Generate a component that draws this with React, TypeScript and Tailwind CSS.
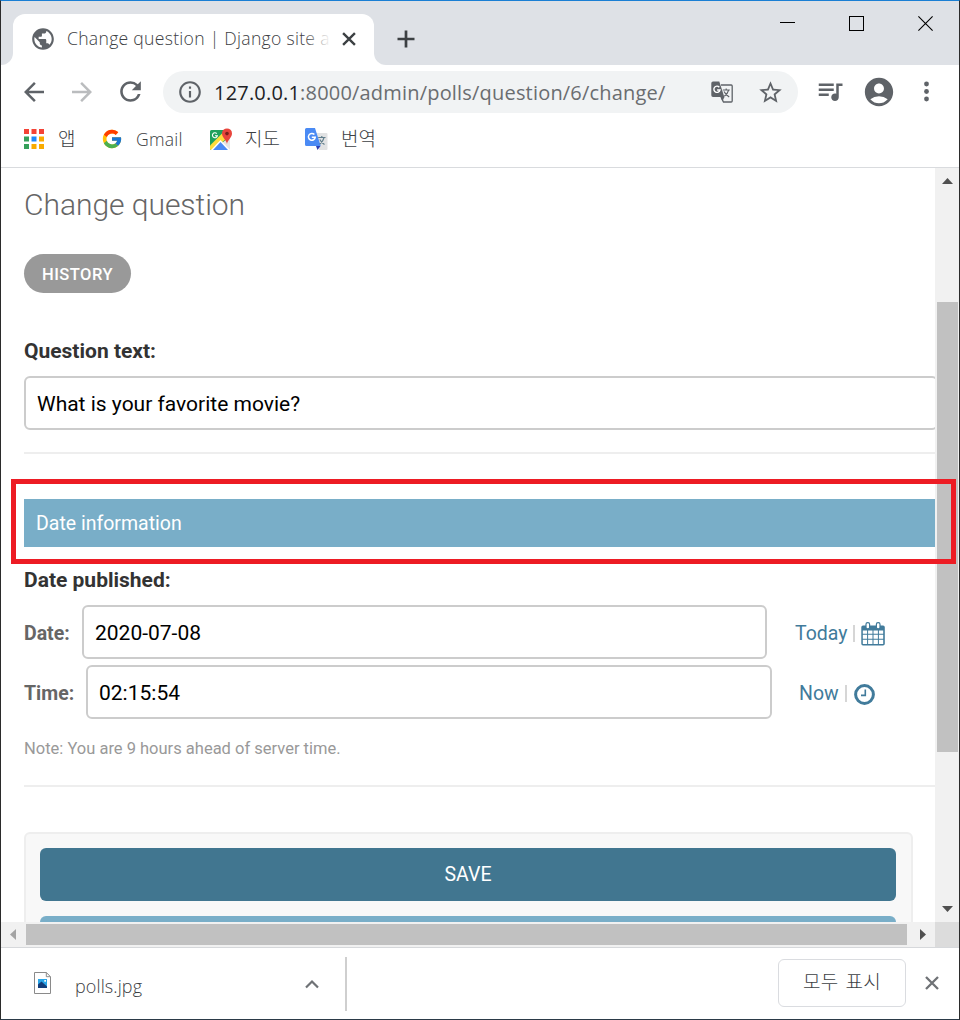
import React from "react";
import {
  MdPublic,
  MdArrowBack,
  MdArrowForward,
  MdRefresh,
  MdInfoOutline,
  MdStarBorder,
  MdQueueMusic,
  MdAccountCircle,
} from "react-icons/md";
import { FcGoogle } from "react-icons/fc";

const uiFont = "font-['Open_Sans','Noto_Sans_CJK_KR',sans-serif]";

function TabStrip() {
  return (
    <div className="flex h-[64px] shrink-0 items-end bg-[#dee1e6]">
      <div className="h-3 w-3 bg-white">
        <div className="h-3 w-3 rounded-br-xl bg-[#dee1e6]" />
      </div>
      <div className="flex h-[51px] w-[361px] items-center rounded-t-xl bg-white pl-[17px]">
        <MdPublic className="mb-[2px] size-[26px] text-[#5f6368]" />
        <div className="relative ml-[11px] h-7 w-[264px] overflow-hidden text-[17.6px] leading-[25px] font-light whitespace-nowrap text-[#3c4043]">
          <span className="tracking-[0.28px]">Change question | Django site a</span>
          <div className="absolute top-0 right-0 h-7 w-7 bg-gradient-to-r from-white/0 to-white" />
        </div>
        <svg className="mb-px ml-[11px] size-[14px]" viewBox="0 0 13 13">
          <path d="M1 1l11 11M12 1L1 12" stroke="#3c4043" strokeWidth="2.2" />
        </svg>
      </div>
      <div className="h-3 w-3 bg-white">
        <div className="h-3 w-3 rounded-bl-xl bg-[#dee1e6]" />
      </div>
      <svg className="mb-[17px] ml-[11px] size-[18px]" viewBox="0 0 18 18">
        <path d="M9 0.5v17M0.5 9h17" stroke="#3c4043" strokeWidth="2.7" />
      </svg>
      <div className="flex-1" />
      <div className="flex h-[64px] w-[179px] items-start pt-[15px]">
        <svg className="h-[15px] w-[15px]" viewBox="0 0 15 15" shapeRendering="crispEdges">
          <path d="M0 6.5h15" stroke="#000" />
        </svg>
        <svg className="ml-[54px] h-[15px] w-[15px]" viewBox="0 0 15 15" shapeRendering="crispEdges">
          <rect x=".5" y=".5" width="14" height="14" fill="none" stroke="#000" />
        </svg>
        <svg className="ml-[54px] h-[15px] w-[15px]" viewBox="0 0 15 15">
          <path d="M.4.4l14.2 14.2M14.6.4L.4 14.6" stroke="#000" strokeWidth="1.1" />
        </svg>
      </div>
    </div>
  );
}

function TranslateGlyph() {
  return (
    <svg className="size-[22px]" viewBox="0 0 22 22">
      <path d="M10 4h10.2a1 1 0 0 1 1 1v15a1 1 0 0 1-1 1h-7.700l-2.500-5" fill="#f1f3f4" stroke="#5f6368" strokeWidth="1.300" />
      <path d="M2 .5h6.300L13.300 16H2a1.700 1.700 0 0 1-1.700-1.700V2.200A1.700 1.700 0 0 1 2 .5z" fill="#5f6368" />
      <path d="M9.800 16h3.700l-2.200 4.600z" fill="#5f6368" />
      <path d="M8.300 6.200A3.100 3.100 0 1 0 9 9H6.100" fill="none" stroke="#fff" strokeWidth="1.400" />
      <path d="M11.800 9h7M15.200 7.500V9M17.600 9.200c-.6 2.600-2.200 4.600-4.300 6M13 10.500c1 2 2.800 3.800 5.200 5.500" fill="none" stroke="#5f6368" strokeWidth="1.200" />
    </svg>
  );
}

function Toolbar() {
  return (
    <div className="flex h-[54px] shrink-0 items-center bg-white pl-[18px] text-[#5f6368]">
      <MdArrowBack className="mb-px size-[30px]" />
      <MdArrowForward className="mb-px ml-[18px] size-[30px] text-[#babcbe]" />
      <MdRefresh className="mb-px ml-[18px] size-[31px]" />
      <div className="ml-[17px] flex h-[42px] w-[635px] items-center rounded-full bg-[#f1f3f4] pl-[14px]">
        <MdInfoOutline className="size-[26px]" />
        <div className="ml-[11px] w-[497px] pt-px text-[20px] leading-[42px] tracking-[0.19px] whitespace-nowrap text-[#6a6d70]">
          <span className="text-[#202124]">127.0.0.1</span>:8000/admin/polls/question/6/change/
        </div>
        <TranslateGlyph />
        <MdStarBorder className="ml-[24px] size-[27px]" />
      </div>
      <MdQueueMusic className="mb-[2px] ml-[17px] size-[30px]" />
      <MdAccountCircle className="mb-px ml-[17px] size-[34px]" />
      <svg className="ml-[28px] h-[22px] w-[6px]" viewBox="0 0 6 22">
        <circle cx="2.500" cy="3" r="2.400" fill="#5f6368" />
        <circle cx="2.500" cy="10.500" r="2.400" fill="#5f6368" />
        <circle cx="2.500" cy="18" r="2.400" fill="#5f6368" />
      </svg>
    </div>
  );
}

function AppsIcon() {
  return (
    <svg className="size-[20px]" viewBox="0 0 20 20">
      <path d="M0 0h5v5H0zM7.500 0h5v5h-5zM15 0h5v5h-5z" fill="#f44336" />
      <path d="M0 7.500h5v5H0zM0 15h5v5H0z" fill="#34a05a" />
      <path d="M7.500 7.500h5v5h-5z" fill="#1e88fb" />
      <path d="M15 7.500h5v5h-5zM7.500 15h5v5h-5zM15 15h5v5h-5z" fill="#f9ab00" />
    </svg>
  );
}

function MapsIcon() {
  return (
    <svg className="h-[22px] w-[22px]" viewBox="0 0 22 22">
      <rect x="0" y="2" width="20" height="20" rx="1.500" fill="#e5e5e5" />
      <path d="M1.500 2H14l3 9L3 22H1.500A1.500 1.500 0 0 1 0 20.500v-17A1.500 1.500 0 0 1 1.500 2z" fill="#1fa15d" />
      <path d="M0 17.500L13.500 4l3.500 6L3.500 22H1.500A1.500 1.500 0 0 1 0 20.500z" fill="#fedc3d" />
      <path d="M10.500 12L20 22H1z" fill="#fff" />
      <path d="M10.500 14L18 22H3z" fill="#4a8af4" />
      <path d="M6.800 5.600A2.500 2.500 0 1 0 7.400 7.700H5" fill="none" stroke="#fff" strokeWidth="1.100" />
      <path d="M17 16c-.6-4.500-5-6.300-5-10.600a5 5 0 0 1 10 0C22 9.700 17.600 11.500 17 16z" fill="#e8453c" />
      <circle cx="17" cy="5.600" r="1.800" fill="#7b1f1a" />
    </svg>
  );
}

function TranslateIcon() {
  return (
    <svg className="h-[22px] w-[23px]" viewBox="0 0 23 22">
      <path d="M10 5h11.500a1 1 0 0 1 1 1v15a1 1 0 0 1-1 1H14z" fill="#e1e2e3" />
      <path d="M11 18h4.500l-3 4z" fill="#2b3fb5" />
      <path d="M1.500 0H10l5.700 18H1.500A1.500 1.500 0 0 1 0 16.500v-15A1.500 1.500 0 0 1 1.500 0z" fill="#4a8af4" />
      <path d="M9.400 6.600A3.400 3.400 0 1 0 10.200 9.300H6.800" fill="none" stroke="#fff" strokeWidth="1.500" />
      <path d="M13.200 9.500h7.300M16.800 8v1.500M19 9.700c-.6 3-2.300 5-4.300 6.600M14.800 11.500c1 2 2.500 3.600 4.700 5" fill="none" stroke="#607d8b" strokeWidth="1.200" />
    </svg>
  );
}

function Bookmarks() {
  return (
    <div className="flex h-[48px] shrink-0 items-center bg-white pb-[8px] pl-[23px] text-[19px] font-light text-[#3c4043]">
      <AppsIcon />
      <span className="ml-[14px] w-[45px] leading-6 whitespace-nowrap">앱</span>
      <FcGoogle className="-ml-[2px] size-[22px]" />
      <span className="ml-[13px] w-[74px] text-[17.600px] leading-6 tracking-[0.25px] whitespace-nowrap">Gmail</span>
      <MapsIcon />
      <span className="ml-[13px] w-[60px] leading-6 whitespace-nowrap">지도</span>
      <TranslateIcon />
      <span className="ml-[13px] leading-6 whitespace-nowrap">번역</span>
    </div>
  );
}

function CalendarIcon() {
  return (
    <svg className="h-[24px] w-[24px]" viewBox="0 0 24 24">
      <path d="M2 3.500h20a1.800 1.800 0 0 1 1.800 1.800v16.400a1.800 1.800 0 0 1-1.800 1.800H2A1.800 1.800 0 0 1 .3 21.700V5.300A1.800 1.800 0 0 1 2 3.500z" fill="#417b9b" />
      <path d="M1.800 8.500h4.300v3.300H1.800zM7.100 8.500h4.400v3.300H7.100zM12.500 8.500h4.400v3.300h-4.400zM17.900 8.500h4.300v3.300h-4.300zM1.800 12.800h4.300v3.900H1.800zM7.100 12.800h4.400v3.900H7.100zM12.500 12.800h4.400v3.900h-4.400zM17.900 12.800h4.300v3.900h-4.300zM1.800 17.700h4.300V22H1.800zM7.100 17.700h4.400V22H7.100zM12.500 17.700h4.400V22h-4.400zM17.900 17.700h4.300V22h-4.300z" fill="#fff" />
      <rect x="5" y=".6" width="3.600" height="6.200" rx="1.600" fill="#fff" stroke="#417b9b" strokeWidth="1.200" />
      <rect x="15.400" y=".6" width="3.600" height="6.200" rx="1.600" fill="#fff" stroke="#417b9b" strokeWidth="1.200" />
    </svg>
  );
}

function ClockIcon() {
  return (
    <svg className="size-[21px]" viewBox="0 0 21 21">
      <circle cx="10.500" cy="10.500" r="8.900" fill="none" stroke="#417b9b" strokeWidth="3" />
      <path d="M11.300 5.500v5.900H7" fill="none" stroke="#417b9b" strokeWidth="1.600" />
    </svg>
  );
}

function Field({ className, value }: { className: string; value: string }) {
  return (
    <div
      className={`flex h-[54px] shrink-0 items-center rounded-md border-2 border-[#ccc] bg-white pt-px pl-[11px] text-[21px] leading-6 text-black ${className}`}
    >
      {value}
    </div>
  );
}

function AdminForm() {
  return (
    <div className="h-[754px] w-[934px] overflow-hidden bg-white pl-[23px] font-[Roboto,'Noto_Sans_CJK_KR',sans-serif] whitespace-nowrap">
      <h1 className="mt-[19px] h-9 text-[30px] leading-9 font-light tracking-[-0.04px] text-[#666]">Change question</h1>
      <div className="mt-[31px] flex h-[39px] w-[107px] items-center justify-center rounded-full bg-[#999] pt-[3px] text-[16.5px] font-medium tracking-[0.5px] text-white">
        HISTORY
      </div>
      <div className="mt-[46px] h-6 text-[21px] leading-6 font-bold text-[#333]">Question text:</div>
      <Field className="mt-[13px] w-[914px]" value="What is your favorite movie?" />
      <div className="mt-[22px] h-[2px] bg-[#eee]" />
      <div className="mt-[45px] flex h-12 items-center bg-[#79aec8] pt-[2px] pl-3 text-[19.500px] text-white">Date information</div>
      <div className="mt-[21px] h-6 text-[21px] leading-6 font-bold text-[#333]">Date published:</div>
      <div className="mt-[13px] flex items-center text-[19.500px] text-[#417b9b]">
        <span className="w-[58px] pt-[3px] font-bold text-[#666]">Date:</span>
        <Field className="w-[685px]" value="2020-07-08" />
        <span className="ml-[28px] w-[58px] pt-[3px]">Today</span>
        <div className="mt-[3px] mr-[6px] h-[17px] w-[2px] bg-[#d6d6d6]" />
        <div className="pt-[4px]">
          <CalendarIcon />
        </div>
      </div>
      <div className="mt-[6px] flex items-center text-[19.500px] text-[#417b9b]">
        <span className="w-[62px] pt-[3px] font-bold text-[#666]">Time:</span>
        <Field className="w-[686px]" value="02:15:54" />
        <span className="ml-[27px] w-[46px] pt-[3px]">Now</span>
        <div className="mt-[3px] mr-[7px] h-[17px] w-[2px] bg-[#d6d6d6]" />
        <div className="pt-[5px]">
          <ClockIcon />
        </div>
      </div>
      <div className="mt-[20px] h-5 text-[16.500px] leading-5 text-[#999]">Note: You are 9 hours ahead of server time.</div>
      <div className="mt-[26px] h-[2px] bg-[#eee]" />
      <div className="mt-[45px] w-[889px] rounded-md border-2 border-[#eee] bg-[#f8f8f8] py-[14px] pr-[15px] pl-[14px]">
        <div className="flex h-[53px] items-center justify-center rounded-md bg-[#417690] pt-px text-[19.500px] text-white">SAVE</div>
        <div className="mt-[15px] h-[53px] rounded-md bg-[#79aec8]" />
      </div>
    </div>
  );
}

function VerticalScrollbar() {
  return (
    <div className="flex h-[754px] w-6 flex-col items-end bg-[#f1f1f1] pr-px">
      <svg className="mt-[10px] mr-[5px] h-[6px] w-[11px]" viewBox="0 0 11 6">
        <path d="M5.500 0L11 6H0z" fill="#505050" />
      </svg>
      <div className="mt-[118px] h-[450px] w-[21px] bg-[#c1c1c1]" />
      <svg className="mt-[154px] mr-[5px] h-[6px] w-[11px]" viewBox="0 0 11 6">
        <path d="M0 0h11L5.500 6z" fill="#505050" />
      </svg>
    </div>
  );
}

function HorizontalScrollbar() {
  return (
    <div className="flex h-[25px] shrink-0 bg-[#f1f1f1]">
      <div className="flex w-[934px] items-center">
        <svg className="ml-[9px] h-[11px] w-[6px]" viewBox="0 0 6 11">
          <path d="M6 0v11L0 5.500z" fill="#a3a3a3" />
        </svg>
        <div className="ml-[10px] h-[21px] w-[881px] bg-[#c1c1c1]" />
        <svg className="ml-[13px] h-[11px] w-[6px]" viewBox="0 0 6 11">
          <path d="M0 0v11l6-5.500z" fill="#505050" />
        </svg>
      </div>
      <div className="w-6 bg-[#dcdcdc]" />
    </div>
  );
}

function DownloadShelf() {
  return (
    <div className="flex flex-1 items-start border-t border-[#d6d8db] bg-white text-[18px] font-light text-[#3c4043]">
      <svg className="mt-[24px] ml-[33px] h-[22px] w-[17px]" viewBox="0 0 17 22">
        <path d="M.5.5h11.800l4.200 4.200v16.800H.5z" fill="#fff" stroke="#8a8a8a" />
        <path d="M12.300.5v4.200h4.200" fill="none" stroke="#8a8a8a" />
        <path d="M4 7h9v9H4z" fill="#2ba6e8" />
        <path d="M4 12.500L7.500 9.500 13 14.500V16H4z" fill="#123c7a" />
        <rect x="10.300" y="8" width="1.700" height="1.700" fill="#fff" />
      </svg>
      <span className="mt-[24px] ml-[24px] w-[230px] leading-7 tracking-[0.1px]">polls.jpg</span>
      <svg className="mt-[31px] h-[10px] w-[14px]" viewBox="0 0 14 10">
        <path d="M1 8.500l6-6 6 6" fill="none" stroke="#6f7276" strokeWidth="2.200" />
      </svg>
      <div className="mt-[9px] ml-[26px] h-[54px] w-[2px] bg-[#cfcfcf]" />
      <div className="mt-[11px] ml-[431px] flex h-[48px] w-[128px] items-center justify-center rounded-md border border-[#dadce0] pb-px text-[19px] tracking-[0.2px] [word-spacing:2px]">
        모두 표시
      </div>
      <svg className="mt-[28px] ml-[19px] size-[14px]" viewBox="0 0 14 14">
        <path d="M1 1l12 12M13 1L1 13" stroke="#6f7276" strokeWidth="2.300" />
      </svg>
    </div>
  );
}

export default function App() {
  return (
    <div
      className={`relative flex h-[1020px] w-[960px] flex-col overflow-hidden border border-t-[#1a7fd4] border-r-[#2b2b2b] border-b-[#2b3a48] border-l-[#2b2b2b] bg-white ${uiFont}`}
    >
      <TabStrip />
      <Toolbar />
      <Bookmarks />
      <div className="flex h-[755px] shrink-0 border-t border-[#d9dbde]">
        <AdminForm />
        <VerticalScrollbar />
      </div>
      <HorizontalScrollbar />
      <DownloadShelf />
      <div className="absolute top-[478px] left-[10px] h-[85px] w-[945px] border-[5px] border-[#ed1c24]" />
    </div>
  );
}
